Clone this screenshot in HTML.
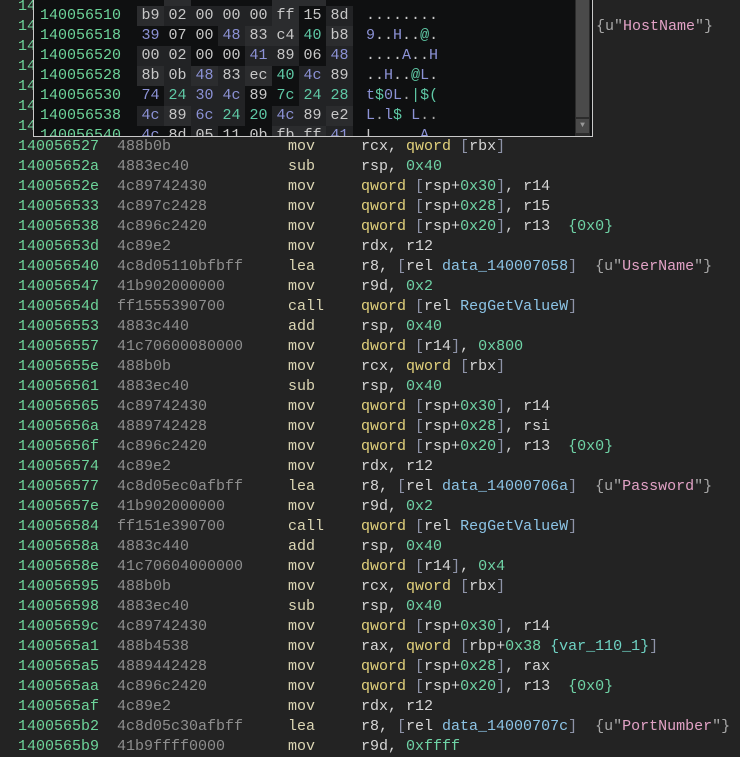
<!DOCTYPE html>
<html><head><meta charset="utf-8"><style>
html,body{margin:0;padding:0;}
body{width:740px;height:749px;background:#232323;overflow:hidden;position:relative;font-family:"Liberation Mono",monospace;font-size:15px;}
.r{position:absolute;left:0;height:20px;line-height:20px;white-space:pre;width:740px;}
.r > span{position:absolute;top:0;}
.a{left:18px;color:#6dd49a}
.b{left:117px;color:#8e8e8e}
.m{left:288px;color:#dcd6b4}
.o{left:361px;color:#d6d6d6}
.y{color:#e3d27c}.k{color:#8e93a8}.n{color:#6fd3a6}.d{color:#8cc4e6}.s{color:#e2a2c6}.g{color:#a8a8a8}.w{color:#d6d6d6}.t{color:#6fd3c4}
#pop{position:absolute;left:33px;top:-2px;width:558px;height:138px;background:#0f1011;border:1px solid #c9c9c9;border-top:none;overflow:hidden;}
.p{position:absolute;left:0;height:20px;line-height:20px;white-space:pre;width:540px;}
.p .pa{position:absolute;left:6px;color:#6dd49a}
.c{position:absolute;width:27px;text-align:center;color:#c8c8c8;height:20px}
.c.l{background:#2b2c2e}.c.m2{background:#222325}
.bl{color:#8c92d6!important}.tl{color:#5fc9a6!important}
.asc{position:absolute;left:332px;}
#sb{position:absolute;left:541px;top:0;width:15px;height:138px;background:#2c2c2c;}
#th{position:absolute;left:1px;top:0;width:13px;height:119px;background:#4a4a4a;}
#ar{position:absolute;left:1px;top:121px;width:13px;height:14px;background:#4a4a4a;color:#999;font-size:8px;text-align:center;line-height:14px}
</style></head><body>

<div class="r" style="top:-3px"><span class="a">140056508</span></div>
<div class="r" style="top:17px"><span class="a">140056510</span><span class="o" style="left:596px"><span class="g">{u"</span><span class="s">HostName</span><span class="g">"}</span></span></div>
<div class="r" style="top:37px"><span class="a">140056517</span></div>
<div class="r" style="top:57px"><span class="a">14005651d</span></div>
<div class="r" style="top:77px"><span class="a">140056520</span></div>
<div class="r" style="top:97px"><span class="a">140056525</span></div>
<div class="r" style="top:117px"><span class="a">140056527</span></div>

<div class="r" style="top:137px"><span class="a">140056527</span><span class="b">488b0b</span><span class="m">mov</span><span class="o">rcx, <span class="y">qword</span> <span class="k">[</span>rbx<span class="k">]</span></span></div>
<div class="r" style="top:157px"><span class="a">14005652a</span><span class="b">4883ec40</span><span class="m">sub</span><span class="o">rsp, <span class="n">0x40</span></span></div>
<div class="r" style="top:177px"><span class="a">14005652e</span><span class="b">4c89742430</span><span class="m">mov</span><span class="o"><span class="y">qword</span> <span class="k">[</span>rsp+<span class="n">0x30</span><span class="k">]</span>, r14</span></div>
<div class="r" style="top:197px"><span class="a">140056533</span><span class="b">4c897c2428</span><span class="m">mov</span><span class="o"><span class="y">qword</span> <span class="k">[</span>rsp+<span class="n">0x28</span><span class="k">]</span>, r15</span></div>
<div class="r" style="top:217px"><span class="a">140056538</span><span class="b">4c896c2420</span><span class="m">mov</span><span class="o"><span class="y">qword</span> <span class="k">[</span>rsp+<span class="n">0x20</span><span class="k">]</span>, r13  <span class="n">{0x0}</span></span></div>
<div class="r" style="top:237px"><span class="a">14005653d</span><span class="b">4c89e2</span><span class="m">mov</span><span class="o">rdx, r12</span></div>
<div class="r" style="top:257px"><span class="a">140056540</span><span class="b">4c8d05110bfbff</span><span class="m">lea</span><span class="o">r8, <span class="k">[</span>rel <span class="d">data_140007058</span><span class="k">]</span>  <span class="g">{u"</span><span class="s">UserName</span><span class="g">"}</span></span></div>
<div class="r" style="top:277px"><span class="a">140056547</span><span class="b">41b902000000</span><span class="m">mov</span><span class="o">r9d, <span class="n">0x2</span></span></div>
<div class="r" style="top:297px"><span class="a">14005654d</span><span class="b">ff1555390700</span><span class="m">call</span><span class="o"><span class="y">qword</span> <span class="k">[</span>rel <span class="d">RegGetValueW</span><span class="k">]</span></span></div>
<div class="r" style="top:317px"><span class="a">140056553</span><span class="b">4883c440</span><span class="m">add</span><span class="o">rsp, <span class="n">0x40</span></span></div>
<div class="r" style="top:337px"><span class="a">140056557</span><span class="b">41c70600080000</span><span class="m">mov</span><span class="o"><span class="y">dword</span> <span class="k">[</span>r14<span class="k">]</span>, <span class="n">0x800</span></span></div>
<div class="r" style="top:357px"><span class="a">14005655e</span><span class="b">488b0b</span><span class="m">mov</span><span class="o">rcx, <span class="y">qword</span> <span class="k">[</span>rbx<span class="k">]</span></span></div>
<div class="r" style="top:377px"><span class="a">140056561</span><span class="b">4883ec40</span><span class="m">sub</span><span class="o">rsp, <span class="n">0x40</span></span></div>
<div class="r" style="top:397px"><span class="a">140056565</span><span class="b">4c89742430</span><span class="m">mov</span><span class="o"><span class="y">qword</span> <span class="k">[</span>rsp+<span class="n">0x30</span><span class="k">]</span>, r14</span></div>
<div class="r" style="top:417px"><span class="a">14005656a</span><span class="b">4889742428</span><span class="m">mov</span><span class="o"><span class="y">qword</span> <span class="k">[</span>rsp+<span class="n">0x28</span><span class="k">]</span>, rsi</span></div>
<div class="r" style="top:437px"><span class="a">14005656f</span><span class="b">4c896c2420</span><span class="m">mov</span><span class="o"><span class="y">qword</span> <span class="k">[</span>rsp+<span class="n">0x20</span><span class="k">]</span>, r13  <span class="n">{0x0}</span></span></div>
<div class="r" style="top:457px"><span class="a">140056574</span><span class="b">4c89e2</span><span class="m">mov</span><span class="o">rdx, r12</span></div>
<div class="r" style="top:477px"><span class="a">140056577</span><span class="b">4c8d05ec0afbff</span><span class="m">lea</span><span class="o">r8, <span class="k">[</span>rel <span class="d">data_14000706a</span><span class="k">]</span>  <span class="g">{u"</span><span class="s">Password</span><span class="g">"}</span></span></div>
<div class="r" style="top:497px"><span class="a">14005657e</span><span class="b">41b902000000</span><span class="m">mov</span><span class="o">r9d, <span class="n">0x2</span></span></div>
<div class="r" style="top:517px"><span class="a">140056584</span><span class="b">ff151e390700</span><span class="m">call</span><span class="o"><span class="y">qword</span> <span class="k">[</span>rel <span class="d">RegGetValueW</span><span class="k">]</span></span></div>
<div class="r" style="top:537px"><span class="a">14005658a</span><span class="b">4883c440</span><span class="m">add</span><span class="o">rsp, <span class="n">0x40</span></span></div>
<div class="r" style="top:557px"><span class="a">14005658e</span><span class="b">41c70604000000</span><span class="m">mov</span><span class="o"><span class="y">dword</span> <span class="k">[</span>r14<span class="k">]</span>, <span class="n">0x4</span></span></div>
<div class="r" style="top:577px"><span class="a">140056595</span><span class="b">488b0b</span><span class="m">mov</span><span class="o">rcx, <span class="y">qword</span> <span class="k">[</span>rbx<span class="k">]</span></span></div>
<div class="r" style="top:597px"><span class="a">140056598</span><span class="b">4883ec40</span><span class="m">sub</span><span class="o">rsp, <span class="n">0x40</span></span></div>
<div class="r" style="top:617px"><span class="a">14005659c</span><span class="b">4c89742430</span><span class="m">mov</span><span class="o"><span class="y">qword</span> <span class="k">[</span>rsp+<span class="n">0x30</span><span class="k">]</span>, r14</span></div>
<div class="r" style="top:637px"><span class="a">1400565a1</span><span class="b">488b4538</span><span class="m">mov</span><span class="o">rax, <span class="y">qword</span> <span class="k">[</span>rbp+<span class="n">0x38</span> <span class="t">{var_110_1}</span><span class="k">]</span></span></div>
<div class="r" style="top:657px"><span class="a">1400565a5</span><span class="b">4889442428</span><span class="m">mov</span><span class="o"><span class="y">qword</span> <span class="k">[</span>rsp+<span class="n">0x28</span><span class="k">]</span>, rax</span></div>
<div class="r" style="top:677px"><span class="a">1400565aa</span><span class="b">4c896c2420</span><span class="m">mov</span><span class="o"><span class="y">qword</span> <span class="k">[</span>rsp+<span class="n">0x20</span><span class="k">]</span>, r13  <span class="n">{0x0}</span></span></div>
<div class="r" style="top:697px"><span class="a">1400565af</span><span class="b">4c89e2</span><span class="m">mov</span><span class="o">rdx, r12</span></div>
<div class="r" style="top:717px"><span class="a">1400565b2</span><span class="b">4c8d05c30afbff</span><span class="m">lea</span><span class="o">r8, <span class="k">[</span>rel <span class="d">data_14000707c</span><span class="k">]</span>  <span class="g">{u"</span><span class="s">PortNumber</span><span class="g">"}</span></span></div>
<div class="r" style="top:737px"><span class="a">1400565b9</span><span class="b">41b9ffff0000</span><span class="m">mov</span><span class="o">r9d, <span class="n">0xffff</span></span></div>

<div id="pop">
<div class="p" style="top:-12px"><span class="pa">140056508</span><span class="c" style="left:103px">48</span><span class="c l" style="left:130px">8d</span><span class="c" style="left:157px">05</span><span class="c" style="left:184px">37</span><span class="c" style="left:211px">0b</span><span class="c l" style="left:238px">fb</span><span class="c l" style="left:265px">ff</span><span class="c" style="left:292px">ff</span><span class="asc" style="color:#9a9ad0">H..7....</span></div>
<div class="p" style="top:8px"><span class="pa">140056510</span><span class="c l" style="left:103px">b9</span><span class="c m2" style="left:130px">02</span><span class="c m2" style="left:157px">00</span><span class="c m2" style="left:184px">00</span><span class="c m2" style="left:211px">00</span><span class="c l" style="left:238px">ff</span><span class="c" style="left:265px">15</span><span class="c m2" style="left:292px">8d</span><span class="asc" style="color:#c8c8c8">........</span></div>
<div class="p" style="top:28px"><span class="pa">140056518</span><span class="c bl" style="left:103px">39</span><span class="c" style="left:130px">07</span><span class="c" style="left:157px">00</span><span class="c bl m2" style="left:184px">48</span><span class="c l" style="left:211px">83</span><span class="c l" style="left:238px">c4</span><span class="c tl" style="left:265px">40</span><span class="c l" style="left:292px">b8</span><span class="asc" style="color:#c8c8c8"><span class="bl">9</span>..<span class="bl">H</span>..<span class="tl">@</span>.</span></div>
<div class="p" style="top:48px"><span class="pa">140056520</span><span class="c m2" style="left:103px">00</span><span class="c m2" style="left:130px">02</span><span class="c" style="left:157px">00</span><span class="c" style="left:184px">00</span><span class="c bl m2" style="left:211px">41</span><span class="c m2" style="left:238px">89</span><span class="c" style="left:265px">06</span><span class="c bl m2" style="left:292px">48</span><span class="asc" style="color:#c8c8c8">....<span class="bl">A</span>..<span class="bl">H</span></span></div>
<div class="p" style="top:68px"><span class="pa">140056528</span><span class="c l" style="left:103px">8b</span><span class="c m2" style="left:130px">0b</span><span class="c bl l" style="left:157px">48</span><span class="c m2" style="left:184px">83</span><span class="c l" style="left:211px">ec</span><span class="c tl" style="left:238px">40</span><span class="c bl m2" style="left:265px">4c</span><span class="c m2" style="left:292px">89</span><span class="asc" style="color:#c8c8c8">..<span class="bl">H</span>..<span class="tl">@</span><span class="bl">L</span>.</span></div>
<div class="p" style="top:88px"><span class="pa">140056530</span><span class="c bl" style="left:103px">74</span><span class="c tl m2" style="left:130px">24</span><span class="c bl m2" style="left:157px">30</span><span class="c bl m2" style="left:184px">4c</span><span class="c" style="left:211px">89</span><span class="c tl" style="left:238px">7c</span><span class="c tl m2" style="left:265px">24</span><span class="c tl m2" style="left:292px">28</span><span class="asc"><span class="bl">t</span><span class="tl">$</span><span class="bl">0L</span><span class="g">.</span><span class="tl">|$(</span></span></div>
<div class="p" style="top:108px"><span class="pa">140056538</span><span class="c bl m2" style="left:103px">4c</span><span class="c l" style="left:130px">89</span><span class="c bl m2" style="left:157px">6c</span><span class="c tl m2" style="left:184px">24</span><span class="c tl" style="left:211px">20</span><span class="c bl m2" style="left:238px">4c</span><span class="c m2" style="left:265px">89</span><span class="c l" style="left:292px">e2</span><span class="asc"><span class="bl">L</span><span class="g">.</span><span class="bl">l</span><span class="tl">$ </span><span class="bl">L</span><span class="g">..</span></span></div>
<div class="p" style="top:128px"><span class="pa">140056540</span><span class="c bl" style="left:103px">4c</span><span class="c" style="left:130px">8d</span><span class="c m2" style="left:157px">05</span><span class="c" style="left:184px">11</span><span class="c" style="left:211px">0b</span><span class="c l" style="left:238px">fb</span><span class="c l" style="left:265px">ff</span><span class="c bl m2" style="left:292px">41</span><span class="asc" style="color:#c8c8c8">L.....<span class="bl">A</span>.</span></div>
<div id="sb"><div id="th"></div><div id="ar">▼</div></div>
</div>
</body></html>
